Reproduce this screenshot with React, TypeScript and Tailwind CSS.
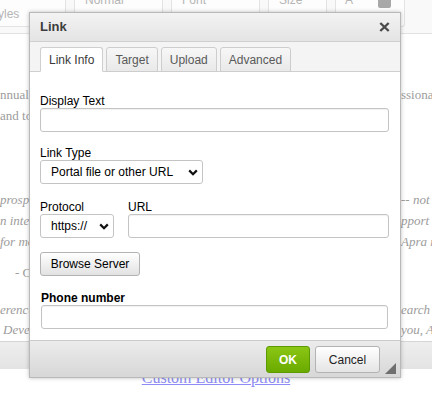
import React from "react";

const Chevron = () => (
  <svg width="10" height="7" viewBox="0 0 10 7" className="shrink-0">
    <path d="M1.2 1.4 5 5.2l3.8-3.8" fill="none" stroke="#111" strokeWidth="2.2" />
  </svg>
);

const Field = ({ className = "" }: { className?: string }) => (
  <div
    className={`h-[24px] rounded-[3px] border border-[#c4c4c4] bg-white shadow-[inset_0_1px_1px_rgba(0,0,0,0.06)] ${className}`}
  />
);

const Select = ({ value, className = "" }: { value: string; className?: string }) => (
  <div
    className={`flex h-[24px] items-center justify-between rounded-[3px] border border-[#c4c4c4] bg-white pl-[10px] pr-[4px] text-[12px] text-black ${className}`}
  >
    <span>{value}</span>
    <Chevron />
  </div>
);

const Label = ({ children, bold }: { children: React.ReactNode; bold?: boolean }) => (
  <div className={`h-[14px] text-[12px] leading-[14px] text-black ${bold ? "font-bold" : ""}`}>{children}</div>
);

const tabs = ["Link Info", "Target", "Upload", "Advanced"];

const Line = ({ left, right, italic, className = "" }: { left: string; right?: string; italic?: boolean; className?: string }) => (
  <div className={`flex h-[21px] items-center whitespace-nowrap leading-[21px] ${italic ? "italic" : ""} ${className}`}>
    <span className="w-[29px] overflow-hidden">{left}</span>
    <span className="ml-auto w-[31px] overflow-hidden">{right}</span>
  </div>
);

export default function App() {
  return (
    <div className="relative h-[398px] w-[432px] overflow-hidden bg-white font-['Liberation_Sans',Arial,sans-serif]">
      {/* page behind the dialog */}
      <div className="flex h-[34px] gap-[8px] border-b border-[#e2e2e2] bg-[#f9f9f9] pb-[7px] text-[12px] text-[#b5b5b5]">
        <div className="flex h-[27px] w-[66px] items-center rounded-br-[3px] border-b border-r border-[#e3e3e3] bg-[#fdfdfd] pt-[1px]">
          <span className="-ml-[2px]">yles</span>
        </div>
        <div className="h-[27px] w-[89px] overflow-hidden rounded-b-[3px] border border-t-0 border-[#e3e3e3] bg-[#fdfdfd] pl-[10px]">
          <div className="-mt-[9px]">Normal</div>
        </div>
        <div className="h-[27px] w-[89px] overflow-hidden rounded-b-[3px] border border-t-0 border-[#e3e3e3] bg-[#fdfdfd] pl-[10px]">
          <div className="-mt-[9px]">Font</div>
        </div>
        <div className="h-[27px] w-[59px] overflow-hidden rounded-b-[3px] border border-t-0 border-[#e3e3e3] bg-[#fdfdfd] pl-[10px]">
          <div className="-mt-[9px]">Size</div>
        </div>
        <div className="flex h-[27px] w-[70px] items-start overflow-hidden rounded-b-[3px] border border-t-0 border-[#e3e3e3] bg-[#fdfdfd] pl-[9px]">
          <div className="-mt-[9px]">A</div>
          <div className="ml-[25px] h-[8px] w-[13px] rounded-b-[2px] bg-[#a8a8a8]" />
        </div>
      </div>

      <div className="font-['Liberation_Serif','Times_New_Roman',serif] text-[13px] text-[#9c9c9c]">
        <Line left="nnual conference" right="ssional" className="mt-[50px]" />
        <Line left="and to" />
        <Line left="prospect" right="-- not only" italic className="mt-[63px]" />
        <Line left="n integrated" right="pport" italic />
        <Line left="for more" right="Apra r" italic />
        <Line left="    - C" className="mt-[10px] pl-[15px]" />
        <Line left="erence" right="earch" italic className="mt-[16px]" />
        <Line left=" Deve" right="you, A" italic className="-mt-[1px] pl-[3px]" />
      </div>
      <div className="mt-[1px] h-[28px] border-t border-[#d6d6d6] bg-gradient-to-b from-[#eeeeee] to-[#e4e4e4]" />
      <div className="text-center font-['Liberation_Serif','Times_New_Roman',serif] text-[16px] leading-[18px] text-[#8c8cf2] underline">
        Custom Editor Options
      </div>

      {/* dialog */}
      <div className="absolute left-[29px] top-[12px] flex h-[366px] w-[372px] flex-col border border-[#b9b9b9] bg-white shadow-[0_0_4px_rgba(0,0,0,0.25)]">
        <div className="flex h-[29px] shrink-0 items-center justify-between border-b border-[#cfcfcf] bg-gradient-to-b from-[#f3f3f3] to-[#e4e4e4] pl-[10px] pr-[10px]">
          <span className="text-[13px] font-bold text-[#3d3d3d]">Link</span>
          <svg width="11" height="10" viewBox="0 0 11 10">
            <path d="M1.3 1 9.7 9M9.7 1 1.3 9" stroke="#4a4a4a" strokeWidth="2.4" />
          </svg>
        </div>

        <div className="flex h-[30px] shrink-0 items-end gap-[3px] border-b border-[#cfcfcf] bg-[#f4f4f4] pl-[10px]">
          {tabs.map((t, i) => (
            <div
              key={t}
              className={`-mb-px flex h-[25px] items-center rounded-t-[3px] border px-[8px] text-[12px] ${
                i === 0
                  ? "border-[#cfcfcf] border-b-white bg-white text-[#3a3a3a]"
                  : "border-[#cdcdcd] bg-gradient-to-b from-[#f7f7f7] to-[#e9e9e9] text-[#595959]"
              }`}
            >
              {t}
            </div>
          ))}
        </div>

        <div className="flex flex-1 flex-col bg-white pl-[10px] pr-[11px] pt-[22px]">
          <Label>Display Text</Label>
          <Field />

          <div className="mt-[14px]">
            <Label>Link Type</Label>
          </div>
          <Select value="Portal file or other URL" className="w-[163px]" />

          <div className="mt-[16px] flex gap-[14px]">
            <div className="w-[74px]">
              <Label>Protocol</Label>
              <Select value="https://" />
            </div>
            <div className="flex-1">
              <Label>URL</Label>
              <Field />
            </div>
          </div>

          <div className="mt-[14px] flex h-[24px] w-[100px] items-center justify-center rounded-[3px] border border-[#b3b3b3] bg-gradient-to-b from-white to-[#e2e2e2] text-[12px] text-black">
            Browse Server
          </div>

          <div className="mt-[15px] px-[1px]">
            <Label bold>Phone number</Label>
            <Field />
          </div>
        </div>

        <div className="relative flex h-[37px] shrink-0 items-start justify-end gap-[5px] border-t border-[#cbcbcb] bg-gradient-to-b from-[#ececec] to-[#d7d7d7] pr-[20px] pt-[5px]">
          <div className="flex h-[27px] w-[44px] items-center justify-center rounded-[3px] border border-[#5c9a00] bg-gradient-to-b from-[#8bc614] to-[#6aaa00] text-[12px] font-bold text-white">
            OK
          </div>
          <div className="flex h-[27px] w-[65px] items-center justify-center rounded-[3px] border border-[#b3b3b3] bg-gradient-to-b from-white to-[#e4e4e4] text-[12px] text-[#222]">
            Cancel
          </div>
          <svg width="11" height="11" viewBox="0 0 11 11" className="absolute bottom-[3px] right-[4px]">
            <path d="M11 0V11H0Z" fill="#6f6f6f" />
          </svg>
        </div>
      </div>
    </div>
  );
}
